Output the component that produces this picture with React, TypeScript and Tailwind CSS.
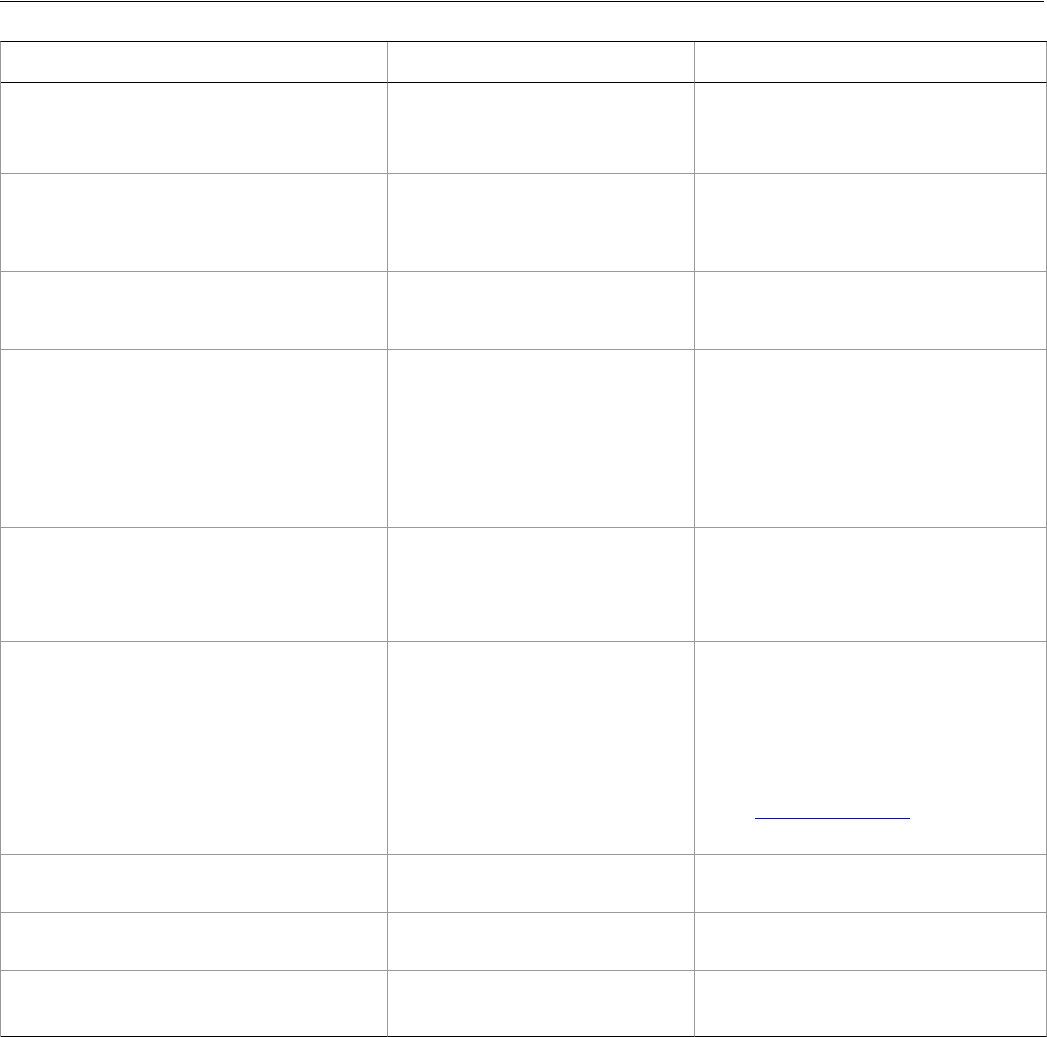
const rows = [
  { h: "h-[91px]" },
  { h: "h-[98px]" },
  { h: "h-[78px]" },
  { h: "h-[178px]" },
  { h: "h-[114px]" },
  { h: "h-[213px]", link: true },
  { h: "h-[58px]" },
  { h: "h-[58px]" },
  { h: "h-[66px]", last: true },
];

const cols = ["w-[387px]", "w-[307px]", "w-[352px]"];

export default function App() {
  return (
    <div className="w-[1047px] bg-white font-['Liberation_Sans',Arial,sans-serif] text-black">
      <div className="pt-px">
        <div className="h-px w-[1044px] bg-black" />
      </div>

      <div className="mt-[39px] border-t border-l border-t-black border-l-[#999999]">
        <div className="flex">
          {cols.map((w) => (
            <div key={w} className={`${w} h-[41px] border-r border-b border-r-[#999999] border-b-black`} />
          ))}
        </div>

        {rows.map((row, i) => (
          <div key={i} className="flex">
            {cols.map((w, j) => (
              <div
                key={w}
                className={`${w} ${row.h} border-r border-b border-r-[#999999] ${
                  row.last ? "border-b-black" : "border-b-[#999999]"
                }`}
              >
                {row.link && j === 2 && (
                  <div className="pl-[60px] pt-[176px]">
                    <a href="#" className="block h-px w-[155px] bg-[#0000ff]" aria-label="link" />
                  </div>
                )}
              </div>
            ))}
          </div>
        ))}
      </div>
    </div>
  );
}
